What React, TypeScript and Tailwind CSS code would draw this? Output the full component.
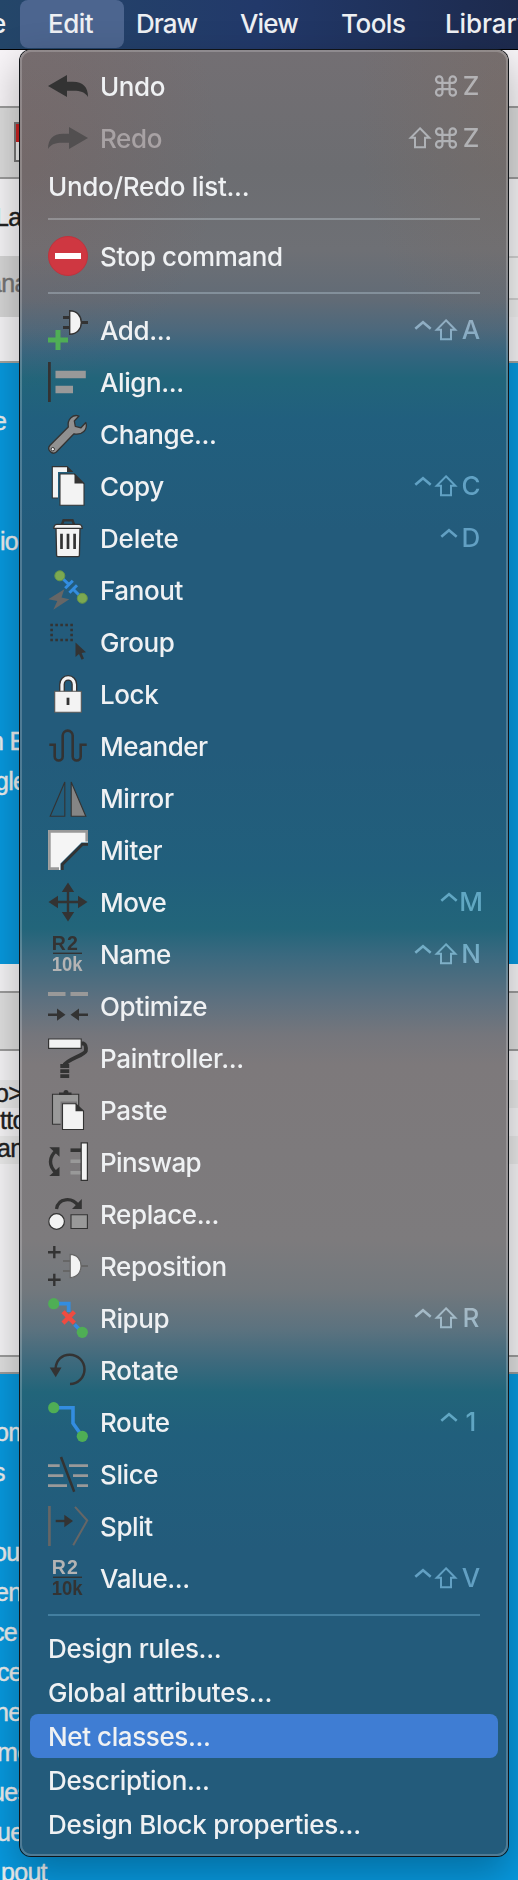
import type { ReactNode } from "react";

const D = "#333333";
const L = "#f3f3f3";
const G = "#999999";
const GREEN = "#4fae55";
const BLUE = "#338de0";

const ratio = (top: string, bottom: string) => (
  <g fontFamily="'Liberation Sans', sans-serif" fontWeight="700">
    <text x="3.8" y="16.3" fontSize="19.5" fill={top} textLength="26" lengthAdjust="spacing">R2</text>
    <path d="M5 19.3H34" stroke={D} strokeWidth="1.4" />
    <text x="3.8" y="36.7" fontSize="20" fill={bottom} textLength="30.8" lengthAdjust="spacingAndGlyphs">10k</text>
  </g>
);

const icons: Record<string, ReactNode> = {
  undo: <path fill={D} d="M0 20 19 9V15.7H25C35 15.7 40 21 40 31C37 26 32 24.7 26 24.7H19V31Z" />,
  redo: <path fill="#524f50" d="M40 20 21 9V15.7H15C5 15.7 0 21 0 31C3 26 8 24.7 14 24.7H21V31Z" />,
  stop: (
    <>
      <circle cx="20" cy="20" r="19.5" fill="#cf3741" stroke="#bf333d" />
      <path fill="#fff" d="M7 17h26v6H7z" />
    </>
  ),
  add: (
    <>
      <path d="M15 7.5h7M15 17.5h7M33 12.5h7" stroke={D} strokeWidth="3" />
      <path d="M21.7.8C29 .8 33.3 6 33.3 12.5S29 24.3 21.7 24.3Z" fill={L} stroke={D} strokeWidth="1.4" />
      <path d="M10 20v20M0 30h20" stroke={GREEN} strokeWidth="5" />
    </>
  ),
  align: (
    <>
      <path fill={D} d="M0 0h2.8v40H0z" />
      <path fill={G} d="M7.5 8.7h30.3v7.6H7.5zM7.5 23.7H25v7.6H7.5z" />
    </>
  ),
  change: (
    <>
      <path d="M31 2C25 0 19 5 20.3 13L1.8 31.5C-1.5 35.5 4 41.5 8.3 38L26 19.8C34 21.5 40.3 15.5 37.8 8.5L33 13.8 27.3 12.3 26.3 7Z" fill="#909090" stroke={D} strokeWidth="1.3" strokeLinejoin="round" />
      <circle cx="4.8" cy="35.2" r="1.7" fill={L} stroke={D} />
    </>
  ),
  copy: (
    <>
      <path d="M4.3.6H19L24.5 6V32H4.3Z" fill={L} stroke={D} strokeWidth="1.1" />
      <path d="M19 0 25 6H19Z" fill={D} />
      <path d="M10 6h17v32H10z" fill="#225f7d" />
      <path d="M12 8h14.5L36 17.5V39.3H12Z" fill={L} stroke={D} strokeWidth="1.1" />
      <path d="M26.5 7.5 36.3 17.5H26.5Z" fill={D} />
    </>
  ),
  delete: (
    <>
      <path d="M14 6.5 15.5 2.3h9L26 6.5" fill="none" stroke={D} strokeWidth="2.4" />
      <path d="M8 10h24l-.6 27.3q0 1.3-1.3 1.3H9.9q-1.3 0-1.3-1.3Z" fill={L} stroke={D} strokeWidth="1.3" />
      <path d="M5.7 10.3Q6.2 6.3 9 6.3h22q2.8 0 3.3 4Z" fill={L} stroke={D} strokeWidth="1.3" strokeLinejoin="round" />
      <path d="M13.5 15.7V31M20 15.7V31M26.6 15.7V31" stroke={D} strokeWidth="2.7" />
    </>
  ),
  fanout: (
    <>
      <path d="M12 6 21 14.7M25.5 19.5 34 28" stroke={BLUE} strokeWidth="3" />
      <path d="M17.2 18.2 24.8 10.7M21.4 22.8 29 15.3" stroke={BLUE} strokeWidth="3" />
      <circle cx="11.8" cy="5.8" r="5" fill="#7ca951" stroke="#66954a" />
      <circle cx="34.3" cy="28.3" r="5" fill="#7ca951" stroke="#66954a" />
      <path d="M16.3 19.3.3 29.3 9.3 31 5.3 39.7 21.3 29.3 13.5 27.5Z" fill="#666" />
    </>
  ),
  group: (
    <>
      <path d="M2.3 3H25M2.3 18H25" stroke={D} strokeWidth="2.7" strokeDasharray="2.6 2.4" />
      <path d="M3.6 6.7V16M23.6 6.7V16" stroke={D} strokeWidth="2.6" strokeDasharray="2.6 2.4" />
      <path d="M27.5 20.5V35L31 32 33.6 37.7 36 36.5 33.6 31 38 30.3Z" fill={D} />
    </>
  ),
  lock: (
    <>
      <path d="M14 18V10.5a6.2 6.7 0 0 1 12.4 0V18" fill="none" stroke={D} strokeWidth="5.8" />
      <path d="M14 18V10.5a6.2 6.7 0 0 1 12.4 0V18" fill="none" stroke={L} strokeWidth="3.2" />
      <path d="M6.7 17.3h26.6v21H6.7z" fill={L} stroke="#555" strokeWidth="1.1" />
      <path d="M20 23.7V31" stroke={D} strokeWidth="2.8" />
    </>
  ),
  meander: <path d="M1.3 18.7H6.7V30.5a4 4 0 0 0 8 0V9.6a5 5 0 0 1 10 0V30.5a4 4 0 0 0 8 0V18.7h6" fill="none" stroke={D} strokeWidth="2.6" />,
  mirror: (
    <>
      <path d="M16.8 4V38.3H2.2Z" fill="none" stroke={D} strokeWidth="1.1" />
      <path d="M23.2 4V38.3H37.8Z" fill="#858585" stroke={D} strokeWidth="1.1" />
    </>
  ),
  miter: (
    <>
      <path d="M0 0H40V12.5H33.5L12.5 33.5V40H0Z" fill="#f5f5f5" />
      <path d="M38.7 11.5V1.4H1.4V38.6H11" fill="none" stroke="#999" strokeWidth="2.6" />
      <path d="M40 14.3H34.5L14.3 34.5V40" fill="none" stroke={D} strokeWidth="2.8" />
    </>
  ),
  move: (
    <>
      <path d="M20 6V34M6 20H34" stroke={D} strokeWidth="2.4" />
      <path d="M20 .5 26.2 10H13.8ZM20 39.5 26.2 30H13.8ZM.5 20 10 13.8V26.2ZM39.5 20 30 13.8V26.2Z" fill={D} />
    </>
  ),
  name: ratio(D, "#b4b4b4"),
  value: ratio("#b4b4b4", D),
  optimize: (
    <>
      <path d="M0 8H17.5M22.5 8H40" stroke={G} strokeWidth="3.8" />
      <path d="M0 28.7H10M30 28.7H40" stroke={D} strokeWidth="2.4" />
      <path d="M17.5 28.7 9 22.6V34.8ZM22.5 28.7 31 22.6V34.8Z" fill={D} />
    </>
  ),
  paint: (
    <>
      <path d="M33 5.5h2.5q3 1 2.3 7.5C37 17 18 22 16.5 27" fill="none" stroke={D} strokeWidth="3.9" />
      <path d="M.6 1H33.2V10.3H.6z" fill={L} stroke={D} strokeWidth="1.2" />
      <path d="M12.3 26H21.2V30H12.3zM12.3 31.2H21.2V35H12.3zM12.3 36.2H21.2V40H12.3z" fill={D} />
    </>
  ),
  paste: (
    <>
      <path d="M4.5 4.3H30.7V34.3H4.5z" fill={G} stroke={D} strokeWidth="1.1" />
      <path d="M11 5V2.5H15.5Q15.5 0 18 0T20.5 2.5H23.5V5Z" fill={D} />
      <path d="M12.5 11.5H29V36H12.5z" fill="#7a787a" />
      <path d="M14.5 13.7H27.7L35.5 21V39.5H14.5Z" fill={L} stroke={D} strokeWidth="1.1" />
      <path d="M27.5 13.3 35.9 21.3H27.5Z" fill={D} />
    </>
  ),
  pinswap: (
    <>
      <path d="M8.5 8.5C.5 15 .5 24.5 8.5 31" fill="none" stroke={D} strokeWidth="3.4" />
      <path d="M1.3 5.3H11.5V14.7ZM1.3 34H11.5V24.7Z" fill={D} />
      <path d="M22.5 8.2H33" stroke={D} strokeWidth="3.6" />
      <path d="M22.5 19.3H33M22.5 30.8H33" stroke={G} strokeWidth="3.4" />
      <path d="M33.2 .8H39.4V38.3H33.2z" fill={L} stroke={D} strokeWidth="1.2" />
    </>
  ),
  replace: (
    <>
      <path d="M8.5 15C10 4 24 2.5 30.5 12" fill="none" stroke={D} strokeWidth="3.2" />
      <path d="M33.8 5V14.9H24Z" fill={D} />
      <circle cx="8.6" cy="27.5" r="7.8" fill={L} stroke={D} strokeWidth="1.2" />
      <path d="M23 20.7H39.4V34.5H23z" fill={G} stroke={D} strokeWidth="1.1" />
    </>
  ),
  reposition: (
    <>
      <path d="M6.3 0V12.3M0 6.2H12.6M6.3 27.7V40M0 33.8H12.6" stroke={D} strokeWidth="2.4" />
      <path d="M15 15H22M15 25H22M33 20H40" stroke="#666" strokeWidth="2" />
      <path d="M22.2 8.4C29 8.6 33 13.5 33 20S29 31.4 22.2 31.6Z" fill={L} stroke="#666" strokeWidth="1.2" />
    </>
  ),
  ripup: (
    <>
      <path d="M6 5.7H20.7V14M26.5 26.5 33 33" fill="none" stroke={BLUE} strokeWidth="3.8" />
      <path d="M15 13.7 26.4 25.1M26.4 13.7 15 25.1" stroke="#ef4b41" strokeWidth="4.4" />
      <circle cx="5.7" cy="5.7" r="5.6" fill={GREEN} />
      <circle cx="34.3" cy="34.3" r="5.6" fill={GREEN} />
    </>
  ),
  rotate: (
    <>
      <path d="M7.5 19C8 10 14 4.7 21.7 4.7a14.6 14.6 0 0 1 .3 29.3" fill="none" stroke={D} strokeWidth="2.5" />
      <path d="M1.7 17.5H13.5L7.7 27.2Z" fill={D} />
    </>
  ),
  route: (
    <>
      <path d="M6 5.7H25V21.3L34 34" fill="none" stroke={BLUE} strokeWidth="3.6" />
      <circle cx="5.7" cy="5.7" r="5.6" fill={GREEN} />
      <circle cx="34.3" cy="34.3" r="5.6" fill={GREEN} />
    </>
  ),
  slice: (
    <>
      <path d="M0 11.7H11.7M21 11.7H40M0 21.7H15.3M25 21.7H40M0 31.7H19M29 31.7H40" stroke={G} strokeWidth="2.7" />
      <path d="M13 3 26.2 37.8" stroke={D} strokeWidth="2.5" />
    </>
  ),
  split: (
    <>
      <path d="M1.4 0V40" stroke="#666" strokeWidth="2.7" />
      <path d="M27 .8 39.2 14.5 25.2 39.3" fill="none" stroke="#666" strokeWidth="2" />
      <path d="M7.7 15H17" stroke={D} strokeWidth="2.4" />
      <path d="M25 15 16.3 8.8V21.2Z" fill={D} />
    </>
  ),
};

const keyPaths: Record<string, ReactNode> = {
  "^": <path strokeWidth="2.6" d="M8.3 14.8 16 8.3 23.7 14.8" />,
  "⇧": <path strokeWidth="2" d="M13 6.3 22.3 15.7H18V25.3H8V15.7H3.7Z" />,
  "⌘": (
    <path
      strokeWidth="2.2"
      d="M9.4 9.6a3.2 3.2 0 1 0-3.2 3.2H19.8a3.2 3.2 0 1 0-3.2-3.2V22.4a3.2 3.2 0 1 0 3.2-3.2H6.2a3.2 3.2 0 1 0 3.2 3.2Z"
    />
  ),
};

function Key({ k }: { k: string }) {
  if (keyPaths[k])
    return (
      <svg className="h-8 w-[26px]" viewBox="0 0 26 32" fill="none" stroke="currentColor">
        {keyPaths[k]}
      </svg>
    );
  return <span className="w-6 text-center leading-8">{k}</span>;
}

interface ItemProps {
  label: string;
  icon?: string;
  keys?: string;
  track?: string;
  disabled?: boolean;
  active?: boolean;
}

function Item({ label, icon, keys, track = "tracking-[-0.4px]", disabled, active }: ItemProps) {
  return (
    <li
      className={`mx-2.5 flex shrink-0 items-center rounded-lg pl-[18px] pr-[15px] ${icon ? "h-[52px]" : "h-11"} ${
        active ? "bg-[#3f7dd3]" : ""
      }`}
    >
      {icon && (
        <svg className="mr-3 size-10 shrink-0 overflow-visible" viewBox="0 0 40 40">
          {icons[icon]}
        </svg>
      )}
      <span className={`whitespace-pre ${track} ${disabled ? "text-[#a8a2a4]" : "text-[#eff1f3]"}`}>{label}</span>
      {keys && (
        <span className="ml-auto flex items-center text-[#3f4548] mix-blend-plus-lighter">
          {[...keys].map((k, i) => (
            <Key key={i} k={k} />
          ))}
        </span>
      )}
    </li>
  );
}

const Divider = () => <li className="mx-7 my-2.5 h-0.5 shrink-0 bg-[#202425] mix-blend-plus-lighter" />;

function Label({ text, className }: { text: string; className: string }) {
  return (
    <div className={`h-10 whitespace-pre leading-10 text-[#eceff0] [-webkit-text-stroke:0.4px_#eceff0] ${className}`}>
      {text}
    </div>
  );
}

function Backdrop() {
  return (
    <div className="flex h-[1830px] flex-col overflow-hidden bg-[#f6f5f7] font-['Liberation_Sans',sans-serif] text-[25px] tracking-[-0.7px]">
      <div className="h-14 shrink-0 bg-[#f8f5f8]" />
      <div className="h-[73px] shrink-0 border-y-2 border-[#9b9b9b] bg-[#dcdcdc] pl-3.5 pt-3.5">
        <div className="h-10 w-10 border-2 border-[#777] bg-[#eee]">
          <div className="h-[18px] bg-[#cc2222]" />
        </div>
      </div>
      <div className="h-[77px] shrink-0 pt-[18px]">
        <div className="-ml-[5px] h-10 leading-10 text-[#222] [-webkit-text-stroke:0.5px_#222]">La</div>
      </div>
      <div className="flex h-[61px] shrink-0 justify-between bg-[#f0f0f0]">
        <div className="-ml-3 w-16 bg-[#d6d6d6] pt-[7px] leading-[40px] text-[#757575] [-webkit-text-stroke:0.4px_#757575]">
          ana
        </div>
        <div className="mb-[17px] w-16 border-y-2 border-[#d2d2d2] bg-[#f5f5f5]" />
      </div>
      <div className="h-[46px] shrink-0 border-b-2 border-[#a5a49f]" />
      <div className="h-[601px] shrink-0 bg-[#0799df] pt-[38px]">
        <Label text="e" className="-ml-[7px]" />
        <Label text="ion" className="mt-20" />
        <Label text="n E" className="-ml-2.5 mt-40" />
        <Label text="gle" className="-ml-[5px]" />
      </div>
      <div className="h-[27px] shrink-0" />
      <div className="h-[60px] shrink-0 border-y-2 border-[#9c9c9c] bg-[#e0e0e0]" />
      <div className="h-[29px] shrink-0" />
      <div className="h-7 shrink-0 bg-[#eaeaea] leading-[26px] text-[#222] [-webkit-text-stroke:0.4px_#222]">
        <div className="-ml-[5px]">o&gt;</div>
      </div>
      <div className="h-7 shrink-0 leading-6 text-[#222] [-webkit-text-stroke:0.4px_#222]">tto</div>
      <div className="h-7 shrink-0 bg-[#eaeaea] leading-6 text-[#222] [-webkit-text-stroke:0.4px_#222]">
        <div className="-ml-[3px]">an</div>
      </div>
      <div className="h-[191px] shrink-0" />
      <div className="h-[19px] shrink-0 border-y-2 border-[#9c9c9c] bg-[#e0e0e0]" />
      <div className="grow bg-[#0799df] pt-[38px]">
        <Label text="om" className="-ml-[5px]" />
        <Label text="s" className="-ml-[7px]" />
        <Label text="out" className="-ml-[7px] mt-10" />
        <Label text="en" className="-ml-[5px]" />
        <Label text="ce" className="-ml-2" />
        <Label text="ce" className="-ml-[3px]" />
        <Label text="ne" className="-ml-[5px]" />
        <Label text="me" className="-ml-[3px]" />
        <Label text="ues" className="-ml-[9px]" />
        <Label text="ue" className="-ml-[3px]" />
        <Label text="pout" className="ml-px" />
      </div>
    </div>
  );
}

function MenuBar() {
  return (
    <nav className="flex h-[50px] overflow-hidden whitespace-pre border-b border-black bg-[linear-gradient(90deg,#244669,#22396a_50%,#1d2a4d)] text-[26px] font-medium leading-[47px] text-[#eef0f3]">
      <span className="-ml-[9px] w-[29px] shrink-0">e</span>
      <span className="h-12 w-[104px] shrink-0 rounded-lg bg-[#4c658f] pl-7 tracking-[-0.5px]">Edit</span>
      <span className="w-[104px] shrink-0 pl-3 tracking-[-1px]">Draw</span>
      <span className="w-[101px] shrink-0 pl-3 tracking-[-0.9px]">View</span>
      <span className="w-[104px] shrink-0 pl-3 tracking-[-0.5px]">Tools</span>
      <span className="shrink-0 pl-3 tracking-[-0.1px]">Library</span>
    </nav>
  );
}

export default function App() {
  return (
    <div className="relative h-[1880px] w-[518px] overflow-hidden font-['Inter','Liberation_Sans',sans-serif]">
      <MenuBar />
      <Backdrop />
      <ul className="absolute left-[20px] top-[50px] isolate flex h-[1806px] w-[488px] flex-col overflow-hidden rounded-[11px] bg-[radial-gradient(ellipse_200px_240px_at_0_100px,#80605a55,transparent),radial-gradient(ellipse_150px_260px_at_100%_60px,#8068584d,transparent),linear-gradient(#736f73_0px,#6c6d71_120px,#6e7075_200px,#616b76_250px,#4c687c_280px,#35657f_303px,#22657a_328px,#215f7e_370px,#235b7b_480px,#235b7b_700px,#215f7c_820px,#22657a_878px,#3a697f_905px,#5d707f_950px,#75767c_985px,#7d797b_1015px,#7d7b7d_1190px,#72787d_1240px,#5b727f_1280px,#3f6a7d_1310px,#22657a_1342px,#215f7c_1385px,#235b7b_1500px)] pt-2.5 text-[26px] font-[450] shadow-[0_0_0_1px_#101418,0_16px_40px_2px_rgba(0,0,0,0.28)]">
        <Item label="Undo" icon="undo" keys="⌘Z" />
        <Item label="Redo" icon="redo" keys="⇧⌘Z" disabled />
        <Item label="Undo/Redo list..." track="tracking-[-0.3px]" />
        <Divider />
        <Item label="Stop command" icon="stop" />
        <Divider />
        <Item label="Add..." icon="add" keys="^⇧A" />
        <Item label="Align..." icon="align" />
        <Item label="Change..." icon="change" />
        <Item label="Copy" icon="copy" keys="^⇧C" />
        <Item label="Delete" icon="delete" keys="^D" track="tracking-[-0.2px]" />
        <Item label="Fanout" icon="fanout" />
        <Item label="Group" icon="group" />
        <Item label="Lock" icon="lock" />
        <Item label="Meander" icon="meander" track="tracking-[-0.5px]" />
        <Item label="Mirror" icon="mirror" />
        <Item label="Miter" icon="miter" />
        <Item label="Move" icon="move" keys="^M" track="tracking-[-0.6px]" />
        <Item label="Name" icon="name" keys="^⇧N" track="tracking-[-0.5px]" />
        <Item label="Optimize" icon="optimize" />
        <Item label="Paintroller..." icon="paint" track="tracking-[-0.3px]" />
        <Item label="Paste" icon="paste" />
        <Item label="Pinswap" icon="pinswap" track="tracking-[-0.6px]" />
        <Item label="Replace..." icon="replace" />
        <Item label="Reposition" icon="reposition" />
        <Item label="Ripup" icon="ripup" keys="^⇧R" />
        <Item label="Rotate" icon="rotate" track="tracking-[-0.2px]" />
        <Item label="Route" icon="route" keys="^1" />
        <Item label="Slice" icon="slice" />
        <Item label="Split" icon="split" />
        <Item label="Value..." icon="value" keys="^⇧V" />
        <Divider />
        <Item label="Design rules..." track="tracking-[-0.35px]" />
        <Item label="Global attributes..." track="tracking-[-0.2px]" />
        <Item label="Net classes..." active />
        <Item label="Description..." track="tracking-[-0.35px]" />
        <Item label="Design Block properties..." track="tracking-[-0.3px]" />
        <li className="pointer-events-none absolute inset-0 rounded-[11px] border-2 border-white/20" />
      </ul>
    </div>
  );
}
